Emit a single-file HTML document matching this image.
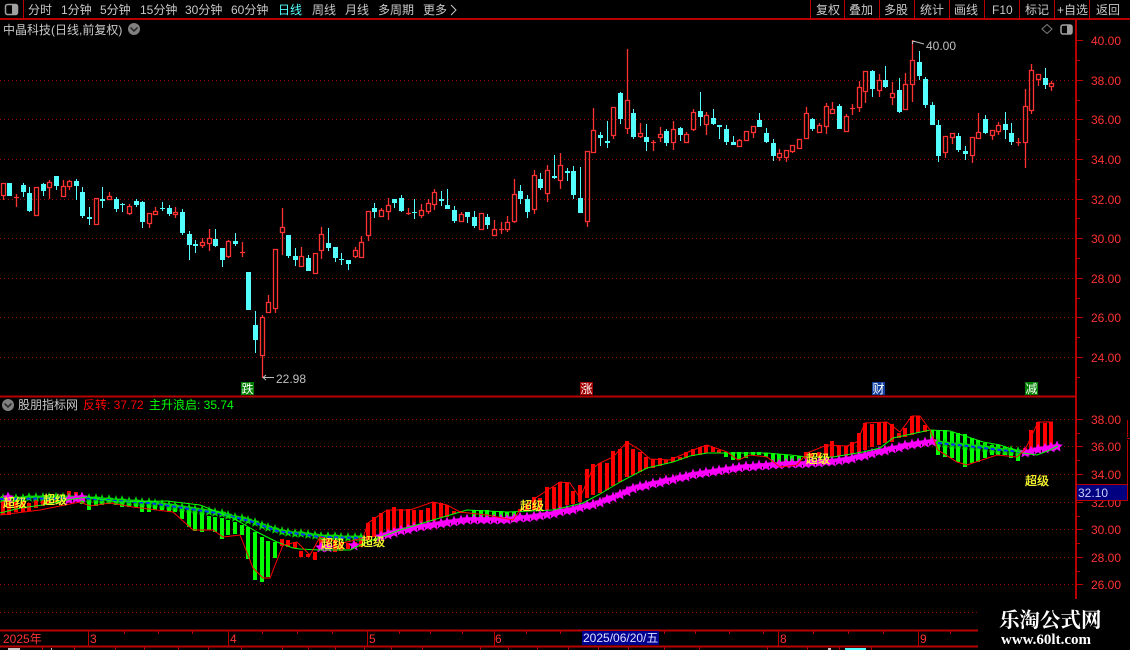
<!DOCTYPE html>
<html lang="zh">
<head>
<meta charset="utf-8">
<title>中晶科技</title>
<style>
html,body{margin:0;padding:0;background:#000;width:1130px;height:650px;overflow:hidden}
svg{display:block;position:absolute;left:0;top:0}
text{font-family:"Liberation Sans","WenQuanYi Zen Hei","Noto Sans CJK SC",sans-serif;font-size:12px;white-space:pre}
.g{fill:#c8c8c8}
.a{fill:#ff3232}
.y{fill:#ffff00;stroke:#ffff60;stroke-width:.25px}
.w{font-family:"Liberation Serif","Noto Serif CJK SC",serif;font-weight:bold;fill:#fff}
</style>
</head>
<body>
<svg width="1130" height="650" viewBox="0 0 1130 650" xmlns="http://www.w3.org/2000/svg">
<defs>
<marker id="ms" markerWidth="14" markerHeight="14" refX="7" refY="7" markerUnits="userSpaceOnUse" overflow="visible">
<path d="M7 1.500L8.600 5.300 12.800 5.700 9.700 8.400 10.600 12.500 7 10.300 3.400 12.500 4.300 8.400 1.200 5.700 5.400 5.300z" fill="#ff00ff"/>
</marker>
<marker id="gs" markerWidth="14" markerHeight="14" refX="7" refY="7" markerUnits="userSpaceOnUse" overflow="visible">
<path d="M7 2L8.300 5.500 11.600 6 9.200 8.400 9.800 11.800 7 10 4.200 11.800 4.800 8.400 2.400 6 5.700 5.500z" fill="#00d800"/>
</marker>
</defs>
<rect width="1130" height="650" fill="#000"/>

<!-- grids -->
<g stroke="#a00000" stroke-width="1" stroke-dasharray="1 3" fill="none" shape-rendering="crispEdges">
<path d="M0 80.5H1075M0 119.5H1075M0 159.5H1075M0 199.5H1075M0 238.5H1075M0 278.5H1075M0 317.5H1075M0 357.5H1075"/>
<path d="M0 419.5H1075M0 446.5H1075M0 474.5H1075M0 502.5H1075M0 529.5H1075M0 557.5H1075M0 584.5H1075M0 612.5H978"/>
</g>

<!-- cyan candles -->
<path fill="#54ffff" shape-rendering="crispEdges" d="M7 183h5V196h-5zM21 185h5V192h-5zM23 183h1V197h-1zM27 193h5V211h-5zM29 187h1V212h-1zM41 184h5V191h-5zM43 183h1V196h-1zM54 176h5V186h-5zM56 176h1V190h-1zM74 181h5V186h-5zM76 179h1V200h-1zM80 192h5V216h-5zM82 187h1V218h-1zM87 217h5V219h-5zM89 207h1V225h-1zM100 199h5V201h-5zM102 187h1V208h-1zM114 199h5V209h-5zM116 197h1V212h-1zM120 204h5V205h-5zM122 203h1V212h-1zM134 201h5V205h-5zM136 199h1V207h-1zM140 202h5V222h-5zM142 201h1V228h-1zM160 208h5V209h-5zM162 202h1V211h-1zM167 208h5V214h-5zM169 205h1V216h-1zM180 212h5V233h-5zM182 209h1V235h-1zM187 234h5V245h-5zM189 231h1V260h-1zM193 244h5V246h-5zM195 240h1V253h-1zM213 239h5V246h-5zM215 229h1V247h-1zM220 248h5V260h-5zM222 248h1V267h-1zM233 241h5V244h-5zM235 233h1V246h-1zM246 272h5V310h-5zM253 325h5V340h-5zM255 311h1V353h-1zM286 235h5V256h-5zM288 235h1V258h-1zM293 256h5V260h-5zM295 248h1V266h-1zM306 258h5V271h-5zM308 255h1V271h-1zM326 243h5V248h-5zM328 228h1V251h-1zM333 247h5V258h-5zM335 247h1V262h-1zM339 259h5V260h-5zM341 253h1V265h-1zM346 260h5V264h-5zM348 260h1V270h-1zM372 208h5V212h-5zM374 203h1V218h-1zM392 199h5V203h-5zM394 199h1V208h-1zM399 198h5V211h-5zM401 195h1V212h-1zM412 212h5V213h-5zM414 199h1V219h-1zM439 199h5V201h-5zM441 191h1V206h-1zM445 205h5V209h-5zM447 189h1V209h-1zM452 210h5V221h-5zM454 206h1V223h-1zM465 212h5V217h-5zM467 212h1V223h-1zM472 217h5V226h-5zM474 211h1V228h-1zM485 217h5V225h-5zM487 214h1V229h-1zM518 191h5V199h-5zM520 185h1V204h-1zM525 199h5V212h-5zM527 195h1V218h-1zM538 179h5V188h-5zM540 173h1V190h-1zM552 176h5V178h-5zM554 155h1V179h-1zM565 171h5V173h-5zM567 168h1V181h-1zM571 171h5V195h-5zM573 166h1V199h-1zM578 198h5V213h-5zM580 167h1V213h-1zM598 135h5V138h-5zM600 132h1V146h-1zM605 141h5V143h-5zM607 121h1V148h-1zM618 93h5V119h-5zM620 92h1V124h-1zM631 113h5V137h-5zM633 109h1V139h-1zM644 137h5V142h-5zM646 124h1V151h-1zM664 131h5V143h-5zM666 129h1V146h-1zM678 128h5V135h-5zM680 127h1V141h-1zM698 111h5V117h-5zM700 92h1V126h-1zM711 118h5V124h-5zM713 109h1V125h-1zM717 125h5V127h-5zM719 125h1V139h-1zM724 129h5V142h-5zM726 125h1V145h-1zM731 142h5V145h-5zM733 136h1V145h-1zM757 120h5V127h-5zM759 113h1V127h-1zM764 133h5V142h-5zM766 128h1V143h-1zM771 143h5V156h-5zM773 139h1V161h-1zM810 119h5V129h-5zM812 118h1V131h-1zM837 106h5V129h-5zM839 104h1V129h-1zM870 71h5V89h-5zM872 70h1V97h-1zM883 80h5V87h-5zM885 66h1V88h-1zM897 90h5V112h-5zM899 78h1V113h-1zM917 62h5V76h-5zM919 51h1V80h-1zM923 79h5V105h-5zM925 77h1V108h-1zM930 105h5V125h-5zM932 102h1V125h-1zM936 125h5V156h-5zM938 120h1V162h-1zM956 136h5V150h-5zM958 133h1V152h-1zM963 151h5V154h-5zM965 146h1V160h-1zM983 119h5V133h-5zM985 115h1V134h-1zM1003 124h5V130h-5zM1005 112h1V139h-1zM1009 133h5V142h-5zM1011 123h1V145h-1zM1043 78h5V85h-5zM1045 68h1V89h-1z"/>

<!-- red candles -->
<path fill="none" stroke="#ff3232" stroke-width="1.300" d="M1.500 183.500h4v12h-4zM3.500 196v4M14 197.500h5M16.500 194V207M34.500 187.500h4v28h-4zM47.500 182.500h4v5h-4zM49.500 180v2M49.500 188v11M61.500 186.500h4v10h-4zM63.500 180v6M67.500 181.500h4v5h-4zM69.500 180v1M69.500 187v3M94.500 198.500h4v26h-4zM107.500 196.500h4v3h-4zM109.500 192v4M127.500 206.500h4v7h-4zM129.500 204v2M129.500 214v1M147.500 213.500h4v10h-4zM149.500 224v4M153.500 211.500h4v3h-4zM155.500 207v4M173.500 212.500h4v2h-4zM175.500 207v5M175.500 215v3M200.500 242.500h4v3h-4zM202.500 238v4M202.500 246v2M207.500 238.500h4v5h-4zM209.500 229v9M209.500 244v7M226.500 241.500h4v15h-4zM228.500 240v1M228.500 257v1M240 252.500h5M242.500 242v15M260.500 317.500h4v38h-4zM262.500 315v2M262.500 356v22M266.500 302.500h4v10h-4zM268.500 295v7M273.500 249.500h4v59h-4zM275.500 309v4M280.500 227.500h4v5h-4zM282.500 208v19M282.500 233v22M299.500 256.500h4v10h-4zM301.500 247v9M313.500 253.500h4v20h-4zM319.500 234.500h4v16h-4zM321.500 227v7M321.500 251v8M353.500 250.500h4v6h-4zM355.500 247v3M355.500 257v1M359.500 242.500h4v15h-4zM361.500 236v6M366.500 211.500h4v24h-4zM368.500 236v5M379.500 210.500h4v6h-4zM381.500 208v2M386.500 205.500h4v6h-4zM388.500 198v7M388.500 212v8M406 213.500h5M408.500 208v7M419.500 210.500h4v5h-4zM421.500 204v6M421.500 216v2M426.500 203.500h4v8h-4zM428.500 199v4M428.500 212v2M432.500 192.500h4v12h-4zM434.500 189v3M434.500 205v5M459.500 214.500h4v7h-4zM461.500 212v2M479.500 213.500h4v16h-4zM492.500 229.500h4v6h-4zM494.500 220v9M499 229.500h5M501.500 222v12M505.500 222.500h4v7h-4zM507.500 216v6M507.500 230v2M512.500 194.500h4v27h-4zM514.500 179v15M514.500 222v1M532.500 175.500h4v34h-4zM534.500 170v5M534.500 210v4M545.500 170.500h4v23h-4zM547.500 165v5M547.500 194v8M558.500 165.500h4v15h-4zM560.500 153v12M560.500 181v8M585.500 151.500h4v70h-4zM587.500 222v5M591.500 130.500h4v22h-4zM593.500 108v22M611.500 107.500h4v28h-4zM613.500 136v3M625.500 100.500h4v28h-4zM627.500 49v51M627.500 129v5M638.500 133.500h4v3h-4zM640.500 123v10M640.500 137v1M651 142.500h5M653.500 140v11M658.500 134.500h4v3h-4zM660.500 127v7M660.500 138v4M671.500 129.500h4v13h-4zM673.500 121v8M673.500 143v7M684.500 134.500h4v8h-4zM686.500 132v2M691.500 112.500h4v17h-4zM693.500 109v3M693.500 130v1M704.500 115.500h4v9h-4zM706.500 112v3M706.500 125v10M737.500 140.500h4v6h-4zM739.500 139v1M744.500 131.500h4v9h-4zM751.500 126.500h4v6h-4zM753.500 133v5M777.500 153.500h4v4h-4zM779.500 149v4M779.500 158v3M784.500 150.500h4v7h-4zM786.500 158v4M790.500 145.500h4v6h-4zM792.500 152v1M797.500 139.500h4v9h-4zM804.500 113.500h4v25h-4zM806.500 107v6M817.500 125.500h4v7h-4zM819.500 123v2M824.500 106.500h4v20h-4zM826.500 103v3M826.500 127v7M830.500 109.500h4v4h-4zM832.500 102v7M844.500 116.500h4v15h-4zM846.500 114v2M850 108.500h5M852.500 104v11M857.500 87.500h4v20h-4zM859.500 81v6M859.500 108v4M863.500 71.500h4v20h-4zM865.500 92v11M877.500 80.500h4v10h-4zM879.500 74v6M879.500 91v6M890.500 93.500h4v4h-4zM892.500 82v11M892.500 98v7M903.500 84.500h4v25h-4zM905.500 73v11M910.500 60.500h4v24h-4zM912.500 40v20M912.500 85v17M943.500 136.500h4v16h-4zM945.500 153v5M950.500 133.500h4v4h-4zM952.500 138v6M970.500 137.500h4v18h-4zM972.500 156v7M976.500 132.500h4v6h-4zM978.500 113v19M990.500 130.500h4v5h-4zM992.500 136v4M996.500 125.500h4v6h-4zM998.500 122v3M998.500 132v3M1016 142.500h5M1018.500 138v8M1023.500 106.500h4v36h-4zM1025.500 89v17M1025.500 143v25M1029.500 70.500h4v40h-4zM1031.500 64v6M1031.500 111v3M1036.500 74.500h4v5h-4zM1038.500 80v6M1049.500 83.500h4v3h-4zM1051.500 81v2M1051.500 87v4"/>

<!-- lower panel bars -->
<g transform="translate(-.5 0)" shape-rendering="crispEdges">
<path fill="none" stroke="#ff0000" stroke-width="4" d="M3.500 496V515M9.500 498V515M16.500 502V512M23.500 498V512M29.500 503V511M36.500 498V508M43.500 498V506M49.500 497V505M56.500 497V503M63.500 497V502M69.500 491V502M76.500 492V500M282.500 539V546M288.500 540V547M295.500 542V548M301.500 551V557M308.500 554V557M315.500 552V560M321.500 537V550M328.500 538V551M335.500 540V552M341.500 543V551M348.500 543V549M355.500 542V548M361.500 536V547M368.500 523V540M374.500 517V537M381.500 513V535M388.500 510V532M394.500 507V530M401.500 509V528M408.500 509V527M414.500 510V525M421.500 510V523M428.500 508V522M434.500 502V521M441.500 503V518M447.500 505V517M454.500 511V514M461.500 511V513M520.500 509V511M527.500 505V510M534.500 497V510M540.500 498V510M547.500 487V510M554.500 487V509M560.500 482V508M567.500 482V505M573.500 491V504M580.500 485V502M587.500 469V498M593.500 464V495M600.500 463V493M607.500 463V490M613.500 451V486M620.500 449V482M627.500 441V477M633.500 449V475M640.500 452V472M646.500 457V469M653.500 459V468M660.500 458V466M666.500 460V464M673.500 457V462M680.500 457V460M686.500 452V458M693.500 449V456M700.500 447V455M706.500 445V453M713.500 447V452M719.500 450V453M806.500 452V459M812.500 453V458M819.500 452V458M826.500 444V457M832.500 441V457M839.500 446V456M846.500 446V456M852.500 442V454M859.500 433V453M865.500 423V450M872.500 424V447M879.500 422V445M885.500 422V443M892.500 424V442M899.500 433V438M905.500 428V437M912.500 416V435M918.500 416V433M925.500 425V432M1025.500 448V453M1031.500 430V452M1038.500 422V452M1045.500 423V452M1051.500 422V448"/>
<path fill="none" stroke="#00ff00" stroke-width="4" d="M82.500 500V504M89.500 500V510M96.500 498V506M102.500 499V505M109.500 499V504M116.500 499V505M122.500 500V507M129.500 500V507M136.500 500V507M142.500 503V512M149.500 502V512M155.500 503V510M162.500 503V510M169.500 504V512M175.500 504V512M182.500 507V519M189.500 510V527M195.500 512V531M202.500 513V532M209.500 516V530M215.500 517V532M222.500 518V539M228.500 520V535M235.500 522V534M242.500 525V535M248.500 527V559M255.500 532V580M262.500 537V582M268.500 541V577M275.500 542V558M474.500 510V520M481.500 510V518M487.500 510V520M494.500 511V522M501.500 511V522M507.500 512V522M514.500 512V522M726.500 452V457M733.500 452V460M739.500 452V460M746.500 452V458M753.500 452V455M759.500 452V455M766.500 453V457M773.500 454V465M779.500 454V465M786.500 455V465M792.500 456V465M799.500 456V463M932.500 430V439M938.500 430V455M945.500 430V457M952.500 432V458M958.500 433V462M965.500 434V467M972.500 438V463M978.500 440V462M985.500 443V458M992.500 445V455M998.500 445V455M1005.500 447V455M1011.500 448V458M1018.500 450V461"/>
</g>

<!-- green stars -->
<polyline fill="none" stroke="#00d800" stroke-width="2.500" marker-start="url(#gs)" marker-mid="url(#gs)" marker-end="url(#gs)" points="3,498 9,498 16,498 23,498 29,497 36,497 43,497 49,497 56,497 63,497 69,497 76,497 82,497 89,498 96,498 102,499 109,499 116,500 122,500 129,501 136,501 142,502 149,502 155,503 162,504 169,505 175,506 182,507 189,508 195,509 202,510 209,511 215,512 222,513 228,515 235,517 242,518 248,520 255,522 262,525 268,527 275,529 282,531 288,532 295,533 301,533 308,534 315,535 321,536 328,536 335,536 341,537 348,537 355,537 361,537"/>
<polyline fill="none" stroke="#00d800" stroke-width="2.500" marker-start="url(#gs)" marker-mid="url(#gs)" marker-end="url(#gs)" points="938,442 945,443 952,444 958,444 965,445 972,446 978,446 985,447 992,448 998,449 1005,450 1011,450 1018,451"/>
<g fill="none" stroke="#0030ff" stroke-width="2" stroke-dasharray="4 2.630">
<path d="M0 499L83 498L117 501L150 503L183 508L217 513L250 521L277 531L300 534L320 537L363 538"/>
<path d="M938 443L967 446L1000 450L1023 452"/>
<path d="M773 465L803 464"/>
</g>

<!-- magenta stars -->
<polyline fill="none" stroke="#ff00ff" stroke-width="3.500" marker-start="url(#ms)" marker-mid="url(#ms)" marker-end="url(#ms)" points="381,536 388,534 394,532 401,530 408,529 414,527 421,526 428,525 434,524 441,523 447,522 454,521 461,520 467,519 474,519 481,519 487,519 494,519 501,519 507,519 514,518 520,517 527,517 534,516 540,515 547,514 554,513 560,511 567,510 573,509 580,507 587,505 593,504 600,502 607,499 613,497 620,494 627,491 633,488 640,486 646,485 653,483 660,482 666,480 673,479 680,477 686,476 693,474 700,473 706,472 713,471 719,470 726,469 733,468 739,467 746,466 753,466 759,465 766,465 773,464 779,464 786,463 792,463 799,463 806,463 812,462 819,462 826,461 832,461 839,460 846,459 852,458 859,456 865,455 872,453 879,451 885,450 892,448 899,447 905,445 912,444 918,443 925,442 932,441"/>
<polyline fill="none" stroke="#ff00ff" stroke-width="3.500" marker-start="url(#ms)" marker-mid="url(#ms)" marker-end="url(#ms)" points="1025,452 1031,451 1038,449 1045,448 1051,447 1057,446"/>
<polyline fill="none" stroke="none" marker-start="url(#ms)" marker-mid="url(#ms)" marker-end="url(#ms)" points="8,497 69,499 76,498 82,497 321,547 328,547 354,545"/>

<!-- thin lines -->
<path fill="none" stroke="#00ff00" stroke-width="1" d="M0 513L20 508L43 505L67 500L87 497L117 502L167 501L200 505L233 518L257 532L277 542L293 548L300 549L320 550L350 550L367 542L400 530L433 520L467 510L507 512L553 510L583 503L600 494L620 482L647 468L673 462L690 456L707 453L727 453L767 453L790 455L807 457L833 457L863 452L880 448L893 438L930 430L950 431L983 442L1000 445L1023 453L1037 455L1050 450L1058 446"/>
<path fill="none" stroke="#ff0000" stroke-width="1" d="M0 515L40 510L80 502L90 506L110 503L133 507L173 512L193 530L213 530L223 537L240 535L253 568L263 578L270 578L283 545L297 542L310 555L320 537L343 543L363 538L368 523L387 510L410 510L433 502L447 505L460 512L487 515L513 520L520 510L537 497L560 482L570 483L580 498L593 468L600 463L613 457L627 442L640 450L650 459L670 460L693 450L707 445L727 452L738 460L750 455L767 457L780 467L797 465L807 453L827 445L847 446L857 442L865 423L887 422L900 432L912 416L920 416L930 430L938 450L957 462L967 465L997 455L1017 457L1025 450L1038 422L1053 422"/>

<!-- frame lines -->
<g stroke="#b80000" fill="none" shape-rendering="crispEdges">
<path stroke-width="2" d="M0 19H1130M0 396.500H1076M0 630.500H978M0 646.500H978"/>
<path stroke-width="2" d="M1076 20V599"/>
<path stroke-width="1" d="M23.500 0V19M810.500 0V19M844.500 0V19M879.500 0V19M914.500 0V19M949.500 0V19M984.500 0V19M1019.500 0V19M1054.500 0V19M1089.500 0V19"/>
<path stroke-width="1" d="M88.500 631V646M228.500 631V646M367.500 631V646M494.500 631V646M778.500 631V646M918.500 631V646"/>
<path stroke-width="1" d="M124.500 631v3M158.500 631v3M192.500 631v3M262.500 631v3M297.500 631v3M332.500 631v3M399.500 631v3M430.500 631v3M462.500 631v3M526.500 631v3M560.500 631v3M664.500 631v3M695.500 631v3M729.500 631v3M763.500 631v3M813.500 631v3M848.500 631v3M883.500 631v3M950.500 631v3"/>
<path stroke-width="1" d="M42.500 647v3M74.500 647v3M115.500 647v3M144.500 647v3M178.500 647v3M208.500 647v3M241.500 647v3M282.500 647v3M308.500 647v3M335.500 647v3M364.500 647v3M391.500 647v3M422.500 647v3M480.500 647v3M508.500 647v3M537.500 647v3M568.500 647v3M598.500 647v3M628.500 647v3M664.500 647v3M699.500 647v3M767.500 647v3M807.500 647v3M839.500 647v3M871.500 647v3"/>
<path stroke-width="1" d="M1077 40.500h6M1077 60.500h3M1077 80.500h6M1077 100.500h3M1077 119.500h6M1077 139.500h3M1077 159.500h6M1077 179.500h3M1077 199.500h6M1077 218.500h3M1077 238.500h6M1077 258.500h3M1077 278.500h6M1077 298.500h3M1077 317.500h6M1077 337.500h3M1077 357.500h6M1077 377.500h3"/>
<path stroke-width="1" d="M1077 419.500h6M1077 433.500h3M1077 446.500h6M1077 460.500h3M1077 474.500h6M1077 488.500h3M1077 502.500h6M1077 516.500h3M1077 529.500h6M1077 543.500h3M1077 557.500h6M1077 571.500h3M1077 584.500h6"/>
<path stroke-width="1" d="M1127.500 420V437M1127.500 440V500M1127 438.500h3"/>
</g>
<rect x="8" y="648" width="12" height="2" fill="#c8c8c8"/>
<rect x="51" y="648" width="1" height="2" fill="#c8c8c8"/>
<rect x="828" y="648" width="3" height="2" fill="#c8c8c8"/>
<rect x="845" y="648" width="21" height="2" fill="#54ffff"/>

<!-- top-left panel icon -->
<rect x="5.500" y="4.500" width="12" height="10" rx="2" fill="none" stroke="#a0a0a0" stroke-width="1.500"/>
<rect x="12" y="5" width="5" height="9" fill="#a0a0a0"/>

<!-- toolbar -->
<g class="g">
<text x="28" y="14" class="g">分时</text>
<text x="61" y="14" class="g">1分钟</text>
<text x="100" y="14" class="g">5分钟</text>
<text x="140" y="14" class="g">15分钟</text>
<text x="185" y="14" class="g">30分钟</text>
<text x="231" y="14" class="g">60分钟</text>
<text x="278" y="14" fill="#54ffff">日线</text>
<text x="312" y="14" class="g">周线</text>
<text x="345" y="14" class="g">月线</text>
<text x="378" y="14" class="g">多周期</text>
<text x="423" y="14" class="g">更多</text>
<path d="M451 5l5 5-5 5" fill="none" stroke="#c8c8c8"/>
<text x="816" y="14" class="g">复权</text>
<text x="849" y="14" class="g">叠加</text>
<text x="884" y="14" class="g">多股</text>
<text x="920" y="14" class="g">统计</text>
<text x="954" y="14" class="g">画线</text>
<text x="992" y="14" class="g">F10</text>
<text x="1025" y="14" class="g">标记</text>
<text x="1057" y="14" class="g">+自选</text>
<text x="1096" y="14" class="g">返回</text>
</g>

<!-- title -->
<text x="3" y="34" class="g">中晶科技(日线,前复权)</text>
<circle cx="134" cy="29" r="6" fill="#808080"/>
<path d="M130.500 27.500l3.500 3.500 3.500-3.500" fill="none" stroke="#222" stroke-width="1.500"/>
<path d="M1047 24.500l5 4.500-5 4.500-5-4.500z" fill="none" stroke="#808080"/>
<rect x="1061" y="25" width="11" height="9" rx="2" fill="none" stroke="#a0a0a0" stroke-width="1.500"/>
<rect x="1067" y="25" width="5" height="9" fill="#a0a0a0"/>

<!-- main axis labels -->
<text x="1091" y="45" class="a">40.00</text>
<text x="1091" y="85" class="a">38.00</text>
<text x="1091" y="124" class="a">36.00</text>
<text x="1091" y="164" class="a">34.00</text>
<text x="1091" y="204" class="a">32.00</text>
<text x="1091" y="243" class="a">30.00</text>
<text x="1091" y="283" class="a">28.00</text>
<text x="1091" y="322" class="a">26.00</text>
<text x="1091" y="362" class="a">24.00</text>

<!-- price annotations -->
<path d="M912.500 44V41.500h3M913 41l11 3" fill="none" stroke="#c0c0c0"/>
<text x="926" y="50" fill="#c0c0c0">40.00</text>
<path d="M274 377.500H263M266 375l-3 2.500 3 2.500" fill="none" stroke="#c0c0c0"/>
<text x="276" y="383" fill="#c0c0c0">22.98</text>

<!-- event badges -->
<rect x="241" y="382" width="13" height="13" fill="#008000"/>
<text x="241.500" y="393" fill="#fff">跌</text>
<rect x="580" y="382" width="13" height="13" fill="#a00000"/>
<text x="580.500" y="393" fill="#fff">涨</text>
<rect x="872" y="382" width="13" height="13" fill="#1040a0"/>
<text x="872.500" y="393" fill="#fff">财</text>
<rect x="1025" y="382" width="13" height="13" fill="#008000"/>
<text x="1025.500" y="393" fill="#fff">减</text>

<!-- lower panel header -->
<circle cx="8" cy="405" r="6" fill="#808080"/>
<path d="M4.500 403.500l3.500 3.500 3.500-3.500" fill="none" stroke="#222" stroke-width="1.500"/>
<text x="18" y="409" class="g">股朋指标网</text>
<text x="83" y="409" fill="#ff0000">反转: 37.72</text>
<text x="149" y="409" fill="#00ff00">主升浪启: 35.74</text>

<!-- chao ji labels -->
<text x="3" y="507" class="y">超级</text>
<text x="43" y="504" class="y">超级</text>
<text x="321" y="548" class="y">超级</text>
<text x="361" y="546" class="y">超级</text>
<text x="520" y="510" class="y">超级</text>
<text x="806" y="463" class="y">超级</text>
<text x="1025" y="485" class="y">超级</text>

<!-- lower axis labels -->
<text x="1091" y="424" class="a">38.00</text>
<text x="1091" y="451" class="a">36.00</text>
<text x="1091" y="479" class="a">34.00</text>
<text x="1091" y="507" class="a">32.00</text>
<text x="1091" y="534" class="a">30.00</text>
<text x="1091" y="562" class="a">28.00</text>
<text x="1091" y="589" class="a">26.00</text>
<rect x="1076.500" y="484.500" width="51" height="16" fill="#000080" stroke="#b80000"/>
<text x="1078" y="497" fill="#d0d0ff">32.10</text>

<!-- date axis -->
<text x="3" y="643" class="a">2025年</text>
<text x="90" y="643" class="a">3</text>
<text x="230" y="643" class="a">4</text>
<text x="369" y="643" class="a">5</text>
<text x="495" y="643" class="a">6</text>
<text x="780" y="643" class="a">8</text>
<text x="920" y="643" class="a">9</text>
<rect x="582" y="631" width="77" height="14" fill="#000090"/>
<text x="583" y="642" fill="#e0e0ff">2025/06/20/五</text>

<!-- watermark -->
<rect x="978" y="600" width="152" height="50" fill="#000"/>
<text x="999" y="627" class="w" style="font-size:20.500px">乐淘公式网</text>
<text x="1001" y="644" class="w" style="font-size:15px">www.60lt.com</text>
</svg>
</body>
</html>
